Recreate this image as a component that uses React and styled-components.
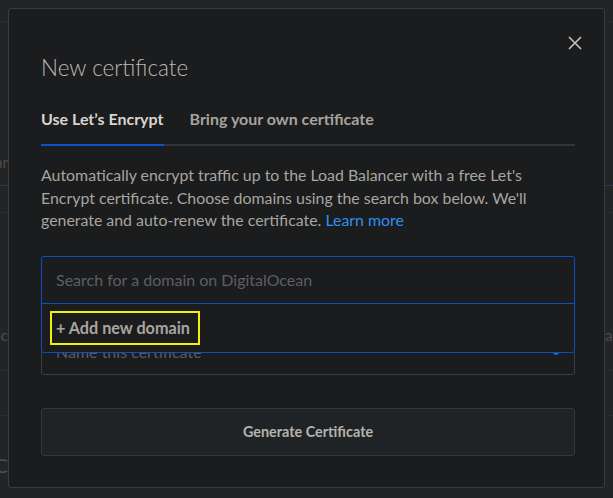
import React from "react";
import styled, { createGlobalStyle } from "styled-components";

const GlobalStyle = createGlobalStyle`
    html, body {
        margin: 0;
        padding: 0;
        background: #232426;
        overflow: hidden;
    }
    * {
        box-sizing: border-box;
    }
`;

const StyledPage = styled.div`
    position: relative;
    width: 613px;
    height: 498px;
    font-family: "Lato", "Liberation Sans", sans-serif;
    overflow: hidden;
`;

const StyledBackdrop = styled.div`
    display: flex;
    flex-direction: column;
    height: 100%;
`;

const StyledBackRow = styled.div`
    height: ${(p) => p.h}px;
    border-bottom: 1px solid ${(p) => p.line || "#2b2c2e"};
    display: flex;
    align-items: flex-end;
    justify-content: space-between;
    padding-bottom: ${(p) => p.pad || 0}px;
    color: #4c4d4f;
    font-size: ${(p) => p.fs || 15}px;
    white-space: nowrap;

    span {
        display: block;
    }
    .left {
        width: 8px;
        overflow: hidden;
        direction: rtl;
    }
    .right {
        width: 8px;
        overflow: hidden;
    }
`;

const StyledModal = styled.div`
    position: absolute;
    left: 8px;
    top: 8px;
    width: 597px;
    height: 480px;
    background: #1b1c1e;
    border: 1px solid #3a3b3d;
    border-radius: 3px;
    padding: 41px 29px 0 32px;
    display: flex;
    flex-direction: column;
`;

const StyledClose = styled.button`
    position: absolute;
    top: 26px;
    right: 21px;
    width: 16px;
    height: 16px;
    padding: 0;
    border: none;
    background: none;
    color: #c6c2bc;
    display: flex;
    align-items: center;
    justify-content: center;
`;

const StyledTitle = styled.h2`
    margin: 0;
    font-size: 22.5px;
    font-weight: 300;
    color: #bdb9b3;
    line-height: 36px;
`;

const StyledTabs = styled.div`
    display: flex;
    gap: 26px;
    margin-top: 23px;
    border-bottom: 2px solid #333437;
`;

const StyledTab = styled.div`
    font-size: 16px;
    font-weight: 700;
    color: ${(p) => (p.active ? "#d8d5d0" : "#a7a39d")};
    padding-bottom: 16px;
    margin-bottom: -2px;
    border-bottom: 2px solid ${(p) => (p.active ? "#0b52c9" : "transparent")};
`;

const StyledText = styled.p`
    margin: 18px 0 0;
    font-size: 15.9px;
    line-height: 22.5px;
    color: #a9a59f;

    a {
        color: #2f8ff0;
        text-decoration: none;
    }
`;

const StyledFields = styled.div`
    position: relative;
    margin-top: 24px;
    display: flex;
    flex-direction: column;
`;

const StyledInput = styled.div`
    height: 47px;
    border: 1px solid ${(p) => p.border || "#3d3e41"};
    border-radius: 3px;
    display: flex;
    align-items: center;
    justify-content: space-between;
    padding: 0 14px;
    font-size: 16px;
    color: #5b5c5e;
    margin-top: ${(p) => p.mt || 0}px;
`;

const StyledInfoDot = styled.span`
    width: 6px;
    height: 6px;
    border-radius: 50%;
    background: #1f63cf;
    margin: 2px 1px 0 0;
`;

const StyledDropdown = styled.div`
    position: absolute;
    left: 0;
    top: 0;
    right: 0;
    height: 97px;
    background: #1b1c1e;
    border: 1px solid #0d4fc4;
    border-radius: 3px;
    display: flex;
    flex-direction: column;
`;

const StyledSearch = styled.div`
    height: 47px;
    border-bottom: 1px solid #0d4fc4;
    display: flex;
    align-items: center;
    padding: 0 14px;
    font-size: 16px;
    color: #5e5f61;
`;

const StyledOption = styled.div`
    flex: 1;
    display: flex;
    align-items: center;
    padding: 0 8px;

    span {
        display: inline-block;
        border: 2px solid #f4f00e;
        padding: 6px 8px 6px 4px;
        font-size: 16.2px;
        font-weight: 700;
        color: #aaa59f;
        line-height: 18px;
    }
`;

const StyledButton = styled.button`
    margin-top: 33px;
    height: 48px;
    width: 100%;
    background: #202325;
    border: 1px solid #35373a;
    border-radius: 3px;
    font-family: inherit;
    font-size: 14.4px;
    font-weight: 700;
    color: #b7b2ab;
`;

const CloseIcon = () => (
    <svg width="14" height="14" viewBox="0 0 14 14">
        <path d="M1 1L13 13M13 1L1 13" stroke="currentColor" strokeWidth="1.6" fill="none" />
    </svg>
);

const Backdrop = () => (
    <StyledBackdrop>
        <StyledBackRow h={22} />
        <StyledBackRow h={164} line="#25395a" pad={14}>
            <span className="left">Forwarding rules ar</span>
            <span className="right"> </span>
        </StyledBackRow>
        <StyledBackRow h={27} />
        <StyledBackRow h={158} pad={26}>
            <span className="left">Balanc</span>
            <span className="right">a</span>
        </StyledBackRow>
        <StyledBackRow h={45} />
        <StyledBackRow h={82} line="transparent" pad={20} fs={20}>
            <span className="left">C</span>
        </StyledBackRow>
    </StyledBackdrop>
);

const App = () => {
    return (
        <StyledPage>
            <GlobalStyle />
            <Backdrop />
            <StyledModal>
                <StyledClose aria-label="Close">
                    <CloseIcon />
                </StyledClose>
                <StyledTitle>New certificate</StyledTitle>
                <StyledTabs>
                    <StyledTab active>Use Let’s Encrypt</StyledTab>
                    <StyledTab>Bring your own certificate</StyledTab>
                </StyledTabs>
                <StyledText>
                    Automatically encrypt traffic up to the Load Balancer with a free Let's
                    <br />
                    Encrypt certificate. Choose domains using the search box below. We'll
                    <br />
                    generate and auto-renew the certificate. <a href="#">Learn more</a>
                </StyledText>
                <StyledFields>
                    <StyledInput border="transparent" />
                    <StyledInput mt={25}>
                        <span>Name this certificate</span>
                        <StyledInfoDot />
                    </StyledInput>
                    <StyledDropdown>
                        <StyledSearch>Search for a domain on DigitalOcean</StyledSearch>
                        <StyledOption>
                            <span>+ Add new domain</span>
                        </StyledOption>
                    </StyledDropdown>
                </StyledFields>
                <StyledButton>Generate Certificate</StyledButton>
            </StyledModal>
        </StyledPage>
    );
};

export default App;
